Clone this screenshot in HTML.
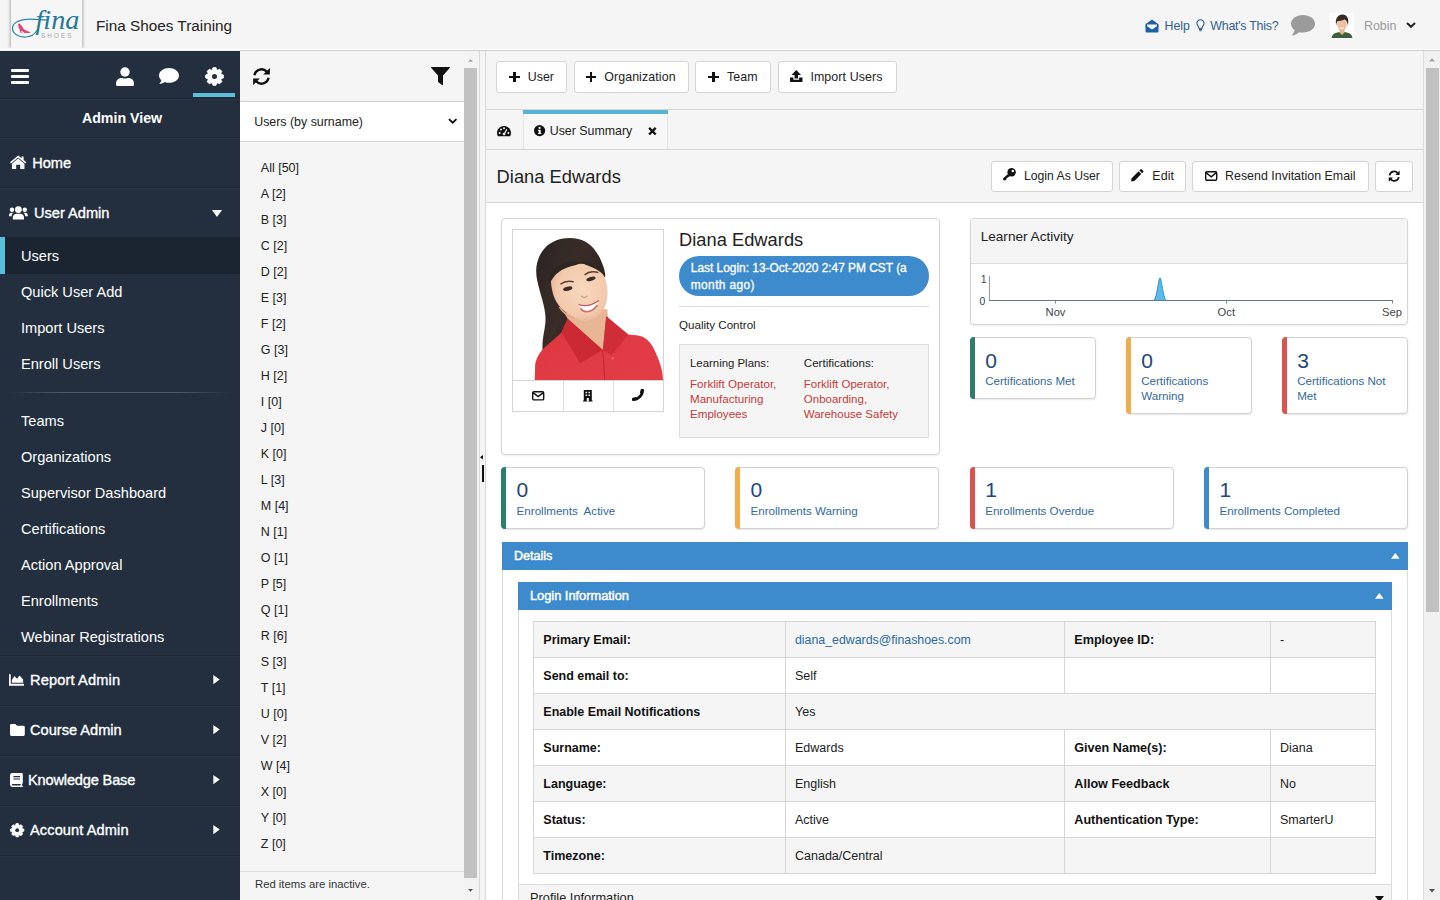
<!DOCTYPE html>
<html lang="en">
<head>
<meta charset="utf-8">
<title>Fina Shoes Training</title>
<style>
*{box-sizing:border-box;margin:0;padding:0}
html,body{width:1440px;height:900px;overflow:hidden;background:#f5f5f5;font-family:"Liberation Sans",sans-serif;color:#222;font-size:13px}
.abs{position:absolute}
.t{position:absolute;white-space:nowrap;line-height:1}
svg{position:absolute;overflow:visible}
.sb{-webkit-text-stroke:.35px #fff}
.btn{position:absolute;background:#fff;border:1px solid #d4d4d4;border-radius:3px}
.card{position:absolute;background:#fff;border:1px solid #d5d5d5;border-radius:4px;box-shadow:0 1px 2px rgba(0,0,0,.08)}
.stat{position:absolute;background:#fff;border:1px solid #d2d2d2;border-radius:4px;box-shadow:0 1px 2px rgba(0,0,0,.1)}
.stat i{position:absolute;left:-1px;top:-1px;bottom:-1px;width:5px;border-radius:4px 0 0 4px}
</style>
</head>
<body>
<!-- p_header -->
<div class="abs" style="left:0px;top:0px;width:1440px;height:50px;background:#f5f5f5;"></div>
<div class="abs" style="left:0px;top:48.5px;width:1440px;height:1.5px;background:#fdfdfd;"></div>
<div class="abs" style="left:0px;top:50px;width:1440px;height:1px;background:#cdcdcd;"></div>
<div class="abs" style="left:0px;top:50px;width:240px;height:1px;background:#eee;"></div>
<div class="abs" style="left:11px;top:-4px;width:70.5px;height:52px;background:#f6f6f6;box-shadow:0 0 3.5px rgba(0,0,0,.5);clip-path:inset(0 -6px 0 -6px);"></div>
<svg style="left:0px;top:0px;" width="96" height="54" viewBox="0 0 96 54">
<path d="M47 19.9 C39 19.6,32 19,27 19.3 C18 19.8,12.3 23.5,12.5 28.5 C12.8 34,19 37.6,26 37 C31 36.6,34.8 34,37 30.5" fill="none" stroke="#2f86a6" stroke-width="1.25" stroke-linecap="round"/>
<path d="M18.3 23.6 C19.6 23,21 24.5,22 26.5 C23.5 29.5,26 30.8,29.8 32 L30.3 33.1 L24.5 33.1 L22.5 31.2 L21.4 30.8 L21.7 33.3 L20.7 33.3 L19.6 29.5 C18.6 27.5,17.8 25.5,18.3 23.6Z" fill="#e2417a"/>
<text x="35.5" y="29.4" font-family="Liberation Serif,serif" font-style="italic" font-size="27" fill="#23789b" textLength="44" lengthAdjust="spacingAndGlyphs">fina</text>
<text x="41" y="38" font-family="Liberation Sans,sans-serif" font-size="6.3" fill="#a2a2a2" letter-spacing="2.1">SHOES</text>
</svg>
<div class="t" style="top:18px;font-size:15.3px;left:96px;color:#222;">Fina Shoes Training</div>
<svg style="left:1145px;top:19px;" width="14" height="14" viewBox="0 0 14 14"><path d="M0.5 5.2 L7 0.6 L13.5 5.2 L13.5 12.4 Q13.5 13.4 12.5 13.4 L1.5 13.4 Q0.5 13.4 0.5 12.4Z" fill="#1f5fa6"/><path d="M2.2 5.6 L11.8 5.6 L11.8 7.4 L7 10.6 L2.2 7.4Z" fill="#f5f5f5"/><path d="M0.5 6.4 L7 10.9 L13.5 6.4 L13.5 8 L7 12.4 L0.5 8Z" fill="#1f5fa6"/></svg>
<div class="t" style="top:20px;font-size:12.4px;left:1164.5px;color:#33608f;">Help</div>
<svg style="left:1195.5px;top:19px;" width="9" height="13" viewBox="0 0 9 13"><path d="M4.5 0.8 C2.3 0.8 0.9 2.4 0.9 4.3 C0.9 5.6 1.6 6.5 2.3 7.4 C2.8 8 2.9 8.6 2.9 9.2 L6.1 9.2 C6.1 8.6 6.2 8 6.7 7.4 C7.4 6.5 8.1 5.6 8.1 4.3 C8.1 2.4 6.7 0.8 4.5 0.8Z" fill="none" stroke="#2a5d94" stroke-width="1.1"/><path d="M3 10.4 L6 10.4 M3.3 11.8 L5.7 11.8" stroke="#2a5d94" stroke-width="1.1"/></svg>
<div class="t" style="top:20px;font-size:12.4px;left:1210.3px;color:#33608f;letter-spacing:-0.25px;">What's This?</div>
<svg style="left:1291px;top:14.6px;" width="24" height="21" viewBox="0 0 24 21"><path d="M12 0 C5.4 0 0 3.9 0 8.8 C0 11.3 1.4 13.5 3.6 15.1 C3.3 17 2.2 19 0.6 20.6 C3.6 20.4 6.2 19.2 7.9 17.2 C9.2 17.5 10.6 17.6 12 17.6 C18.6 17.6 24 13.7 24 8.8 C24 3.9 18.6 0 12 0Z" fill="#9b9b9b"/></svg>
<svg style="left:1330px;top:12.5px;" width="24" height="25" viewBox="0 0 24 25"><rect x="0" y="0" width="24" height="25" fill="#fdfdfd"/>
<path d="M1.5 25 C2 20.5,6.5 19,12 19 C17.5 19,22 20.5,22.5 25Z" fill="#3f5f3c"/>
<path d="M9.3 16 L14.7 16 L14.4 19.6 L12 22 L9.6 19.6Z" fill="#e6b393"/>
<ellipse cx="12" cy="11.8" rx="4.7" ry="5.7" fill="#edc0a2"/>
<path d="M6.3 12.5 C4.6 6,8 1.6,12.4 1.6 C17 1.6,19.6 6,17.7 12.5 C17.6 9.5,16.4 7.6,14.6 6.6 C12.2 7.8,8.6 8,7.2 8.6 C6.6 9.8,6.4 11,6.3 12.5Z" fill="#3b2a22"/>
<path d="M10 14.6 C11.2 15.6,12.8 15.6,14 14.6" fill="none" stroke="#fff" stroke-width="0.9"/></svg>
<div class="t" style="top:20px;font-size:12.4px;left:1364px;color:#9a9a9a;">Robin</div>
<svg style="left:1405.5px;top:22.4px;" width="10" height="6" viewBox="0 0 10 6"><path d="M1 1 L5 4.8 L9 1" fill="none" stroke="#222" stroke-width="2"/></svg>
<!-- p_side -->
<div class="abs" style="left:0px;top:51px;width:240px;height:849px;background:#232f3e;"></div>
<div class="abs" style="left:11.3px;top:69px;width:17.4px;height:3px;background:#fff;border-radius:1px;"></div>
<div class="abs" style="left:11.3px;top:74.8px;width:17.4px;height:3px;background:#fff;border-radius:1px;"></div>
<div class="abs" style="left:11.3px;top:80.6px;width:17.4px;height:3px;background:#fff;border-radius:1px;"></div>
<svg style="left:116px;top:66.7px;" width="18" height="19" viewBox="0 0 18 19"><circle cx="9" cy="5" r="4.7" fill="#fff"/><path d="M0 17.5 L0 16.5 C0 13.2 2.5 11 5.6 11 L6.4 11 C8 11.8 10 11.8 11.6 11 L12.4 11 C15.5 11 18 13.2 18 16.5 L18 17.5 Q18 19 16.5 19 L1.5 19 Q0 19 0 17.5Z" fill="#fff"/></svg>
<svg style="left:159px;top:68.3px;" width="20" height="16" viewBox="0 0 20 16"><path d="M10 0 C4.5 0 0 3.3 0 7.4 C0 9.2 0.9 10.9 2.4 12.2 C2 13.6 1.2 14.8 0.2 15.8 C2.4 15.8 4.4 15 5.8 13.9 C7.1 14.5 8.5 14.8 10 14.8 C15.5 14.8 20 11.5 20 7.4 C20 3.3 15.5 0 10 0Z" fill="#fff"/></svg>
<svg style="left:204.5px;top:66.5px;" width="19" height="19" viewBox="-3 -3 106 106"><path d="M41.5 0.7 L58.5 0.7 L61.8 11.8 L68.7 14.6 L78.9 9.2 L90.8 21.1 L85.4 31.3 L88.2 38.2 L99.3 41.5 L99.3 58.5 L88.2 61.8 L85.4 68.7 L90.8 78.9 L78.9 90.8 L68.7 85.4 L61.8 88.2 L58.5 99.3 L41.5 99.3 L38.2 88.2 L31.3 85.4 L21.1 90.8 L9.2 78.9 L14.6 68.7 L11.8 61.8 L0.7 58.5 L0.7 41.5 L11.8 38.2 L14.6 31.3 L9.2 21.1 L21.1 9.2 L31.3 14.6 L38.2 11.8Z" fill="#fff" stroke="#fff" stroke-width="5" stroke-linejoin="round"/><circle cx="50" cy="50" r="14" fill="#232f3e"/></svg>
<div class="abs" style="left:192.5px;top:93px;width:42.5px;height:4px;background:#5cbfdb;"></div>
<div class="abs" style="left:0px;top:98px;width:240px;height:1px;background:#1e2835;box-shadow:0 1px 0 #293647;"></div>
<div class="t" style="top:111px;font-size:14.2px;left:122px;transform:translateX(-50%);color:#fff;font-weight:700;">Admin View</div>
<div class="abs" style="left:0px;top:137px;width:240px;height:1px;background:#1e2835;box-shadow:0 1px 0 #293647;"></div>
<svg style="left:9.5px;top:155.3px;" width="16.4" height="14" viewBox="0 0 16.4 14"><path d="M8.2 3.6 L1.9 8.8 L1.9 13.6 Q1.9 14 2.3 14 L6.2 14 L6.2 9.8 L10.2 9.8 L10.2 14 L14.1 14 Q14.5 14 14.5 13.6 L14.5 8.8Z" fill="#fff"/><path d="M8.2 0.5 L0 7.3 L1 8.5 L8.2 2.6 L15.4 8.5 L16.4 7.3 L13.6 5 L13.6 1.4 L11.6 1.4 L11.6 3.3Z" fill="#fff"/></svg>
<div class="t sb" style="top:156px;font-size:14.6px;left:32.2px;color:#fff;">Home</div>
<div class="abs" style="left:0px;top:187px;width:240px;height:1px;background:#1e2835;box-shadow:0 1px 0 #293647;"></div>
<svg style="left:9.3px;top:206px;" width="18.8" height="13.4" viewBox="0 0 18.8 13.4"><circle cx="9.4" cy="3.6" r="3.4" fill="#fff"/><circle cx="3" cy="3.8" r="2.2" fill="#fff"/><circle cx="15.8" cy="3.8" r="2.2" fill="#fff"/><path d="M3.8 13.4 L3.8 11.6 C3.8 9.3 5.6 7.8 7.6 7.8 L11.2 7.8 C13.2 7.8 15 9.3 15 11.6 L15 13.4Z" fill="#fff"/><path d="M0 9.4 C0 7.8 1 6.8 2.4 6.8 L4.2 6.8 C3.2 7.8 2.7 8.6 2.6 10.2 L0 10.2Z" fill="#fff"/><path d="M18.8 9.4 C18.8 7.8 17.8 6.8 16.4 6.8 L14.6 6.8 C15.6 7.8 16.1 8.6 16.2 10.2 L18.8 10.2Z" fill="#fff"/></svg>
<div class="t sb" style="top:206px;font-size:14.6px;left:34px;color:#fff;">User Admin</div>
<svg style="left:212px;top:209.5px;" width="10" height="7" viewBox="0 0 10 7"><path d="M0 0 L10 0 L5 7Z" fill="#fff"/></svg>
<div class="abs" style="left:0px;top:237px;width:240px;height:37px;background:#1b2531;"></div>
<div class="abs" style="left:0px;top:237px;width:5px;height:37px;background:#58bedb;"></div>
<div class="t" style="top:249px;font-size:14.6px;left:21px;color:#fff;">Users</div>
<div class="t" style="top:285px;font-size:14.6px;left:21px;color:#fff;">Quick User Add</div>
<div class="t" style="top:321px;font-size:14.6px;left:21px;color:#fff;">Import Users</div>
<div class="t" style="top:357px;font-size:14.6px;left:21px;color:#fff;">Enroll Users</div>
<div class="t" style="top:414px;font-size:14.6px;left:21px;color:#fff;">Teams</div>
<div class="t" style="top:450px;font-size:14.6px;left:21px;color:#fff;">Organizations</div>
<div class="t" style="top:486px;font-size:14.6px;left:21px;color:#fff;">Supervisor Dashboard</div>
<div class="t" style="top:522px;font-size:14.6px;left:21px;color:#fff;">Certifications</div>
<div class="t" style="top:558px;font-size:14.6px;left:21px;color:#fff;">Action Approval</div>
<div class="t" style="top:594px;font-size:14.6px;left:21px;color:#fff;">Enrollments</div>
<div class="t" style="top:630px;font-size:14.6px;left:21px;color:#fff;">Webinar Registrations</div>
<div class="abs" style="left:8px;top:392px;width:224px;height:1px;background:transparent;background:linear-gradient(to right,rgba(80,98,118,0),rgba(80,98,118,.9) 25%,rgba(80,98,118,.9) 75%,rgba(80,98,118,0));"></div>
<div class="abs" style="left:0px;top:655px;width:240px;height:1px;background:#1e2835;box-shadow:0 1px 0 #293647;"></div>
<svg style="left:9.2px;top:674px;" width="15" height="11.8" viewBox="0 0 17 13"><path d="M0 0 L2 0 L2 11 L17 11 L17 13 L0 13Z" fill="#fff"/><path d="M3.2 9.8 L3.2 6.5 L6.2 2.2 L9 5.2 L12 1.6 L16 6 L16 9.8Z" fill="#fff"/></svg>
<div class="t sb" style="top:673px;font-size:14.6px;left:30px;color:#fff;letter-spacing:0.15px;">Report Admin</div>
<svg style="left:213.4px;top:675.4px;" width="7" height="9.2" viewBox="0 0 7 10"><path d="M0 0 L7 5 L0 10Z" fill="#fff"/></svg>
<div class="abs" style="left:0px;top:705px;width:240px;height:1px;background:#1e2835;box-shadow:0 1px 0 #293647;"></div>
<svg style="left:9.5px;top:724px;" width="14.8" height="12" viewBox="0 0 14.8 12"><path d="M1.4 0 L5.4 0 L7 1.8 L13.4 1.8 Q14.8 1.8 14.8 3.2 L14.8 10.6 Q14.8 12 13.4 12 L1.4 12 Q0 12 0 10.6 L0 1.4 Q0 0 1.4 0Z" fill="#fff"/></svg>
<div class="t sb" style="top:723px;font-size:14.6px;left:30px;color:#fff;">Course Admin</div>
<svg style="left:213.4px;top:725.4px;" width="7" height="9.2" viewBox="0 0 7 10"><path d="M0 0 L7 5 L0 10Z" fill="#fff"/></svg>
<div class="abs" style="left:0px;top:755px;width:240px;height:1px;background:#1e2835;box-shadow:0 1px 0 #293647;"></div>
<svg style="left:9.7px;top:773px;" width="12.8" height="14" viewBox="0 0 12.8 14"><path d="M2.4 0 L12 0 Q12.8 0 12.8 .8 L12.8 10.2 L12 11 L12 12.6 L12.8 13 L12.8 14 L2.4 14 Q0 14 0 11.6 L0 2.4 Q0 0 2.4 0Z" fill="#fff"/><path d="M2.6 10.9 L10.6 10.9 L10.6 12.5 L2.6 12.5 Q1.7 12.5 1.7 11.7 Q1.7 10.9 2.6 10.9Z" fill="#232f3e"/><path d="M3.4 3 L10 3 L10 4.2 L3.4 4.2Z M3.4 5.4 L10 5.4 L10 6.6 L3.4 6.6Z" fill="#232f3e"/></svg>
<div class="t sb" style="top:773px;font-size:14.6px;left:28px;color:#fff;letter-spacing:-0.17px;">Knowledge Base</div>
<svg style="left:213.4px;top:775.4px;" width="7" height="9.2" viewBox="0 0 7 10"><path d="M0 0 L7 5 L0 10Z" fill="#fff"/></svg>
<div class="abs" style="left:0px;top:805px;width:240px;height:1px;background:#1e2835;box-shadow:0 1px 0 #293647;"></div>
<svg style="left:9.7px;top:822.8px;" width="14.4" height="14.4" viewBox="-3 -3 106 106"><path d="M41.5 0.7 L58.5 0.7 L61.8 11.8 L68.7 14.6 L78.9 9.2 L90.8 21.1 L85.4 31.3 L88.2 38.2 L99.3 41.5 L99.3 58.5 L88.2 61.8 L85.4 68.7 L90.8 78.9 L78.9 90.8 L68.7 85.4 L61.8 88.2 L58.5 99.3 L41.5 99.3 L38.2 88.2 L31.3 85.4 L21.1 90.8 L9.2 78.9 L14.6 68.7 L11.8 61.8 L0.7 58.5 L0.7 41.5 L11.8 38.2 L14.6 31.3 L9.2 21.1 L21.1 9.2 L31.3 14.6 L38.2 11.8Z" fill="#fff" stroke="#fff" stroke-width="5" stroke-linejoin="round"/><circle cx="50" cy="50" r="14" fill="#232f3e"/></svg>
<div class="t sb" style="top:823px;font-size:14.6px;left:30px;color:#fff;letter-spacing:0.1px;">Account Admin</div>
<svg style="left:213.4px;top:825.4px;" width="7" height="9.2" viewBox="0 0 7 10"><path d="M0 0 L7 5 L0 10Z" fill="#fff"/></svg>
<div class="abs" style="left:0px;top:855px;width:240px;height:1px;background:#1e2835;box-shadow:0 1px 0 #293647;"></div>
<!-- p_list -->
<div class="abs" style="left:240px;top:51px;width:224px;height:849px;background:#f5f5f5;"></div>
<svg style="left:251.5px;top:66.5px;" width="19" height="19" viewBox="0 0 20 20"><path d="M2.6 8.6 A7.5 7.5 0 0 1 15.6 5" fill="none" stroke="#111" stroke-width="2.6"/>
<path d="M17.4 11.4 A7.5 7.5 0 0 1 4.4 15" fill="none" stroke="#111" stroke-width="2.6"/>
<path d="M18.8 1 L18.8 8 L11.8 8Z" fill="#111"/>
<path d="M1.2 19 L1.2 12 L8.2 12Z" fill="#111"/></svg>
<svg style="left:431px;top:67px;" width="19" height="18.5" viewBox="0 0 19 18.5"><path d="M0.6 0 L18.4 0 Q19.4 0 18.7 0.9 L12 8.4 L12 17.6 Q12 18.6 11.2 18 L7.4 15.2 Q7 14.9 7 14.4 L7 8.4 L0.3 0.9 Q-0.4 0 0.6 0Z" fill="#111"/></svg>
<div class="abs" style="left:240px;top:101px;width:224px;height:1px;background:#d0d0d0;"></div>
<div class="abs" style="left:240px;top:102px;width:224px;height:39px;background:#fff;"></div>
<div class="abs" style="left:240px;top:141px;width:224px;height:1px;background:#d8d8d8;"></div>
<div class="t" style="top:116px;font-size:12.4px;left:254.2px;color:#222;">Users (by surname)</div>
<svg style="left:448.3px;top:118.2px;" width="9.4" height="6" viewBox="0 0 10 6"><path d="M1 1 L5 4.8 L9 1" fill="none" stroke="#111" stroke-width="2"/></svg>
<div class="t" style="top:162px;font-size:12.5px;left:260.8px;color:#222;">All [50]</div>
<div class="t" style="top:188px;font-size:12.5px;left:260.8px;color:#222;">A [2]</div>
<div class="t" style="top:214px;font-size:12.5px;left:260.8px;color:#222;">B [3]</div>
<div class="t" style="top:240px;font-size:12.5px;left:260.8px;color:#222;">C [2]</div>
<div class="t" style="top:266px;font-size:12.5px;left:260.8px;color:#222;">D [2]</div>
<div class="t" style="top:292px;font-size:12.5px;left:260.8px;color:#222;">E [3]</div>
<div class="t" style="top:318px;font-size:12.5px;left:260.8px;color:#222;">F [2]</div>
<div class="t" style="top:344px;font-size:12.5px;left:260.8px;color:#222;">G [3]</div>
<div class="t" style="top:370px;font-size:12.5px;left:260.8px;color:#222;">H [2]</div>
<div class="t" style="top:396px;font-size:12.5px;left:260.8px;color:#222;">I [0]</div>
<div class="t" style="top:422px;font-size:12.5px;left:260.8px;color:#222;">J [0]</div>
<div class="t" style="top:448px;font-size:12.5px;left:260.8px;color:#222;">K [0]</div>
<div class="t" style="top:474px;font-size:12.5px;left:260.8px;color:#222;">L [3]</div>
<div class="t" style="top:500px;font-size:12.5px;left:260.8px;color:#222;">M [4]</div>
<div class="t" style="top:526px;font-size:12.5px;left:260.8px;color:#222;">N [1]</div>
<div class="t" style="top:552px;font-size:12.5px;left:260.8px;color:#222;">O [1]</div>
<div class="t" style="top:578px;font-size:12.5px;left:260.8px;color:#222;">P [5]</div>
<div class="t" style="top:604px;font-size:12.5px;left:260.8px;color:#222;">Q [1]</div>
<div class="t" style="top:630px;font-size:12.5px;left:260.8px;color:#222;">R [6]</div>
<div class="t" style="top:656px;font-size:12.5px;left:260.8px;color:#222;">S [3]</div>
<div class="t" style="top:682px;font-size:12.5px;left:260.8px;color:#222;">T [1]</div>
<div class="t" style="top:708px;font-size:12.5px;left:260.8px;color:#222;">U [0]</div>
<div class="t" style="top:734px;font-size:12.5px;left:260.8px;color:#222;">V [2]</div>
<div class="t" style="top:760px;font-size:12.5px;left:260.8px;color:#222;">W [4]</div>
<div class="t" style="top:786px;font-size:12.5px;left:260.8px;color:#222;">X [0]</div>
<div class="t" style="top:812px;font-size:12.5px;left:260.8px;color:#222;">Y [0]</div>
<div class="t" style="top:838px;font-size:12.5px;left:260.8px;color:#222;">Z [0]</div>
<div class="abs" style="left:240px;top:871px;width:224px;height:1px;background:#dcdcdc;"></div>
<div class="t" style="top:879px;font-size:11.3px;left:255px;color:#333;">Red items are inactive.</div>
<div class="abs" style="left:464px;top:51px;width:15px;height:849px;background:#f3f3f3;"></div>
<div class="abs" style="left:464px;top:68px;width:12.7px;height:810px;background:#c1c1c1;"></div>
<svg style="left:468px;top:58.6px;" width="5" height="2.8" viewBox="0 0 6 3.5"><path d="M0 3.5 L3 0 L6 3.5Z" fill="#a3a3a3"/></svg>
<svg style="left:468px;top:889px;" width="5" height="2.8" viewBox="0 0 6 3.5"><path d="M0 0 L3 3.5 L6 0Z" fill="#505050"/></svg>
<div class="abs" style="left:479px;top:51px;width:1px;height:849px;background:#d8d8d8;"></div>
<div class="abs" style="left:480px;top:51px;width:5px;height:849px;background:#f5f5f5;"></div>
<div class="abs" style="left:485px;top:51px;width:1px;height:849px;background:#d8d8d8;"></div>
<svg style="left:480.3px;top:454.6px;" width="3" height="4.5" viewBox="0 0 3 4.5"><path d="M3 0 L0 2.25 L3 4.5Z" fill="#111"/></svg>
<div class="abs" style="left:481.6px;top:465px;width:2.2px;height:17px;background:#111;"></div>
<!-- p_main1 -->
<div class="abs" style="left:486px;top:51px;width:938px;height:152px;background:#f5f5f5;"></div>
<div class="btn" style="left:496.3px;top:61px;width:70.7px;height:32px"></div>
<div class="abs" style="left:509.2px;top:75.6px;width:10.4px;height:2.4px;background:#111;"></div>
<div class="abs" style="left:513.2px;top:71.6px;width:2.4px;height:10.4px;background:#111;"></div>
<div class="t" style="top:71px;font-size:12.4px;left:527.8px;">User</div>
<div class="btn" style="left:573.5px;top:61px;width:115.5px;height:32px"></div>
<div class="abs" style="left:585.9px;top:75.6px;width:10.4px;height:2.4px;background:#111;"></div>
<div class="abs" style="left:589.9px;top:71.6px;width:2.4px;height:10.4px;background:#111;"></div>
<div class="t" style="top:71px;font-size:12.4px;left:604.2px;letter-spacing:0.1px;">Organization</div>
<div class="btn" style="left:695px;top:61px;width:75.5px;height:32px"></div>
<div class="abs" style="left:708.3px;top:75.6px;width:10.4px;height:2.4px;background:#111;"></div>
<div class="abs" style="left:712.3px;top:71.6px;width:2.4px;height:10.4px;background:#111;"></div>
<div class="t" style="top:71px;font-size:12.4px;left:727px;letter-spacing:0.1px;">Team</div>
<div class="btn" style="left:777.5px;top:61px;width:119.5px;height:32px"></div>
<svg style="left:790px;top:70.4px;" width="12.5" height="12" viewBox="0 0 12.5 12"><path d="M6.25 0 L11 4.9 L8 4.9 L8 8.6 L4.5 8.6 L4.5 4.9 L1.5 4.9Z" fill="#111"/><path d="M0 7.6 L3.4 7.6 L3.4 9.8 L9.1 9.8 L9.1 7.6 L12.5 7.6 L12.5 11.2 Q12.5 12 11.7 12 L0.8 12 Q0 12 0 11.2Z" fill="#111"/></svg>
<div class="t" style="top:71px;font-size:12.4px;left:810.4px;letter-spacing:0.1px;">Import Users</div>
<div class="abs" style="left:486px;top:109px;width:938px;height:1px;background:#d4d4d4;"></div>
<div class="abs" style="left:523px;top:110px;width:144.5px;height:39px;background:#f7f7f7;"></div>
<div class="abs" style="left:522.5px;top:110px;width:1px;height:39px;background:#e4e4e4;"></div>
<div class="abs" style="left:667px;top:110px;width:1px;height:39px;background:#e4e4e4;"></div>
<div class="abs" style="left:523px;top:110px;width:144.5px;height:4px;background:#55b4cf;"></div>
<svg style="left:497px;top:125.8px;" width="14" height="10.3" viewBox="0 0 14 10.3"><path d="M7 0 C3.1 0 0 3.1 0 7 C0 8.2 0.3 9.3 0.85 10.3 L13.15 10.3 C13.7 9.3 14 8.2 14 7 C14 3.1 10.9 0 7 0Z" fill="#111"/><circle cx="2.6" cy="6.9" r="1" fill="#f5f5f5"/><circle cx="4" cy="3.6" r="1" fill="#f5f5f5"/><circle cx="7" cy="2.3" r="1" fill="#f5f5f5"/><circle cx="11.4" cy="6.9" r="1" fill="#f5f5f5"/><path d="M9.3 3 L10.4 3.5 L8.2 7.4 C8.7 8.4 8 9.3 7 9.3 C5.9 9.3 5.3 8.2 5.9 7.3 C6.2 6.9 6.7 6.7 7.2 6.8Z" fill="#f5f5f5"/></svg>
<svg style="left:534px;top:125.4px;" width="11.2" height="11.2" viewBox="0 0 12 12"><circle cx="6" cy="6" r="6" fill="#111"/><rect x="5" y="5.2" width="2.2" height="4" fill="#f7f7f7"/><rect x="4.3" y="8.6" width="3.6" height="1.1" fill="#f7f7f7"/><rect x="4.3" y="5.2" width="1.6" height="1.1" fill="#f7f7f7"/><circle cx="6" cy="3.2" r="1.2" fill="#f7f7f7"/></svg>
<div class="t" style="top:125px;font-size:12.4px;left:549.7px;letter-spacing:0.0px;">User Summary</div>
<svg style="left:647.6px;top:126.6px;" width="8.8" height="8.4" viewBox="0 0 8 7.6"><path d="M1 0.8 L7 6.8 M7 0.8 L1 6.8" stroke="#111" stroke-width="2.1"/></svg>
<div class="abs" style="left:486px;top:149px;width:938px;height:1px;background:#d4d4d4;"></div>
<div class="t" style="top:168px;font-size:18.3px;left:496.6px;color:#222;letter-spacing:0.02px;">Diana Edwards</div>
<div class="btn" style="left:991px;top:160.7px;width:121.7px;height:31px"></div>
<svg style="left:1003.3px;top:168.4px;" width="12.8" height="12.4" viewBox="0 0 12.8 12.4"><circle cx="8.6" cy="4.2" r="4.2" fill="#111"/><circle cx="9.8" cy="3" r="1.2" fill="#fff"/><path d="M5.6 5.6 L7.4 7.4 L5.9 8.9 L4.7 8.9 L4.7 10.1 L3.5 10.1 L3.5 11.3 L2.6 12.2 L0.2 12.2 L0.2 10.3Z" fill="#111"/></svg>
<div class="t" style="top:170px;font-size:12.2px;left:1024px;letter-spacing:0.0px;">Login As User</div>
<div class="btn" style="left:1119.3px;top:160.7px;width:66.4px;height:31px"></div>
<svg style="left:1131px;top:168.6px;" width="12.6" height="12.6" viewBox="0 0 12.6 12.6"><path d="M0 12.6 L0.7 9.2 L7.6 2.3 L10.3 5 L3.4 11.9Z" fill="#111"/><path d="M8.4 1.5 L9.6 0.3 Q10 -0.1 10.5 0.3 L12.3 2.1 Q12.7 2.6 12.3 3 L11.1 4.2Z" fill="#111"/></svg>
<div class="t" style="top:170px;font-size:12.4px;left:1152.3px;letter-spacing:0.1px;">Edit</div>
<div class="btn" style="left:1192.3px;top:160.7px;width:176.4px;height:31px"></div>
<svg style="left:1205px;top:170.6px;" width="12.4" height="10" viewBox="0 0 12.4 10"><rect x="0.7" y="0.7" width="11" height="8.6" rx="1.2" fill="none" stroke="#111" stroke-width="1.4"/><path d="M1 1.6 L6.2 5.8 L11.4 1.6" fill="none" stroke="#111" stroke-width="1.4"/></svg>
<div class="t" style="top:170px;font-size:12.4px;left:1225px;letter-spacing:0.02px;">Resend Invitation Email</div>
<div class="btn" style="left:1375px;top:160.7px;width:37.7px;height:31px"></div>
<svg style="left:1387.6px;top:169.8px;" width="12.4" height="12.4" viewBox="0 0 20 20"><path d="M2.6 8.6 A7.5 7.5 0 0 1 15.6 5" fill="none" stroke="#111" stroke-width="2.8"/>
<path d="M17.4 11.4 A7.5 7.5 0 0 1 4.4 15" fill="none" stroke="#111" stroke-width="2.8"/>
<path d="M18.8 1 L18.8 8 L11.8 8Z" fill="#111"/>
<path d="M1.2 19 L1.2 12 L8.2 12Z" fill="#111"/></svg>
<div class="abs" style="left:486px;top:202px;width:938px;height:1px;background:#d4d4d4;"></div>
<div class="abs" style="left:486px;top:203px;width:938px;height:697px;background:#fff;"></div>
<div class="abs" style="left:1423px;top:51px;width:1px;height:849px;background:#dcdcdc;"></div>
<div class="abs" style="left:1424px;top:51px;width:16px;height:849px;background:#f1f1f1;"></div>
<div class="abs" style="left:1426px;top:68px;width:13px;height:544px;background:#c1c1c1;"></div>
<svg style="left:1429.3px;top:58px;" width="6" height="3.5" viewBox="0 0 6 3.5"><path d="M0 3.5 L3 0 L6 3.5Z" fill="#a3a3a3"/></svg>
<svg style="left:1429.3px;top:889px;" width="6" height="3.5" viewBox="0 0 6 3.5"><path d="M0 0 L3 3.5 L6 0Z" fill="#505050"/></svg>
<!-- p_main2 -->
<div class="card" style="left:501.4px;top:218px;width:438.6px;height:237px"></div>
<div class="abs" style="left:512px;top:229px;width:152px;height:182.5px;background:#fff;border:1px solid #d4d4d4;"></div>
<svg style="left:513px;top:230px;overflow:hidden;" width="150" height="150" viewBox="0 0 152 152"><rect width="152" height="152" fill="#fff"/>
<defs><filter id="bl" x="-10%" y="-10%" width="120%" height="120%"><feGaussianBlur stdDeviation="0.7"/></filter>
<radialGradient id="sk" cx="0.55" cy="0.45" r="0.65"><stop offset="0" stop-color="#f8d8c0"/><stop offset="0.7" stop-color="#f2c9ab"/><stop offset="1" stop-color="#e2ab8b"/></radialGradient>
<linearGradient id="sh" x1="0" y1="0" x2="1" y2="1"><stop offset="0" stop-color="#df3842"/><stop offset="1" stop-color="#e23c46"/></linearGradient>
<linearGradient id="hr" x1="0" y1="0" x2="1" y2="0.6"><stop offset="0" stop-color="#2a2422"/><stop offset="0.55" stop-color="#3a2d28"/><stop offset="1" stop-color="#2a2220"/></linearGradient></defs>
<g filter="url(#bl)">
<path d="M30 122 C29 110,33 100,33 90 C33 78,27 64,24.5 51 C22 40,24 27,33 17.5 C41 9.5,54 6.5,66 9 C77 11.5,85 20,90 33 C92 38,93.5 42,93.5 47 L62 60 L56 92 C54 104,50 112,44 118 C40 121,34 122,30 122Z" fill="url(#hr)"/>
<path d="M52 84 L95.5 80 C96.5 90,97 96,96.5 101 L92 123 L66 108Z" fill="#e8b595"/>
<path d="M22 152 L22.5 136 C24 128,29 121,35 116.5 L49 104 L55.5 90 L91 121.5 L94.5 87.5 L117 106 C123 106.5,128 107,132 108.5 C138 112,142 118,144 123 C148 131,150.5 139,151.5 146 L152 152Z" fill="url(#sh)"/>
<path d="M55.5 90 L49 103.5 L68 135 L91 121.5Z" fill="#cb2b35"/>
<path d="M94.5 87.5 L91 121.5 L100 127 L116.5 106.5Z" fill="#cf2e38"/>
<path d="M91 121.5 L93 152" fill="none" stroke="#bf2932" stroke-width="1"/>
<circle cx="101" cy="130" r="1.4" fill="#e8606a"/>
<path d="M38.5 46 C42 40,49 36,57 35 C66 33.5,78 34,86 39 C90 42,93 47,94.5 53 C96 59,96.2 66,95 71 C94 77,92 81,89 84 C86 88,82 91,77 92 C72 93,67 91.5,63 89.5 C56 86,50 81,46.5 76.5 C43 72,40.5 66,39.5 60 C38.5 55,38 50,38.5 46Z" fill="url(#sk)"/>
<path d="M37.5 54 C36.5 46,39 40,45 36.5 C53 32,62 31.5,70 33 C66 35,60 36.5,55 38 C47 41,41 46,37.5 54Z" fill="#2e2623"/>
<path d="M70 33 C78 31,87 35,93.5 47 C89 42,83 38.5,78 37 C75 36,72 34.5,70 33Z" fill="#2e2623"/>
<path d="M67.5 76 C73 78.5,80 77,86.5 72 C85.5 78,80.5 83,75 83 C71 83,68.5 80,67.5 76Z" fill="#fff"/>
<path d="M66.5 75.5 C73 78,80 76.5,87 71.5" fill="none" stroke="#c25a64" stroke-width="1.3"/>
<path d="M68.5 79.5 C72 84.5,80 84,85.5 76" fill="none" stroke="#cf6a72" stroke-width="1.6"/>
<ellipse cx="55.5" cy="59.5" rx="4.8" ry="2" fill="#3b2a25" transform="rotate(-14 55.5 59.5)"/>
<ellipse cx="79" cy="49.5" rx="4.8" ry="2" fill="#3b2a25" transform="rotate(-16 79 49.5)"/>
<path d="M48 55 C52 52,57 51.5,61.5 52.5" fill="none" stroke="#5b4034" stroke-width="1.5"/>
<path d="M72.5 45.5 C76 42.5,81 41.5,86.5 43" fill="none" stroke="#5b4034" stroke-width="1.5"/>
<path d="M69 66.5 C70.5 69,73.5 69,75.5 66.5" fill="none" stroke="#d4977a" stroke-width="1.3"/>
<path d="M47 78 C51 84,57 88,63 90" fill="none" stroke="#e0a888" stroke-width="1.5"/>
</g></svg>
<div class="abs" style="left:512px;top:380px;width:152px;height:1px;background:#d4d4d4;"></div>
<div class="abs" style="left:563px;top:381px;width:1px;height:30px;background:#dedede;"></div>
<div class="abs" style="left:613px;top:381px;width:1px;height:30px;background:#dedede;"></div>
<svg style="left:532px;top:390.6px;" width="12.4" height="9.6" viewBox="0 0 12.4 9.6"><rect x="0.7" y="0.7" width="11" height="8.2" rx="1.2" fill="none" stroke="#111" stroke-width="1.4"/><path d="M1 1.6 L6.2 5.6 L11.4 1.6" fill="none" stroke="#111" stroke-width="1.4"/></svg>
<svg style="left:583px;top:389.6px;" width="9.6" height="11.6" viewBox="0 0 9.6 11.6"><path d="M0.8 0 L8.8 0 L8.8 10.6 L9.6 10.6 L9.6 11.6 L0 11.6 L0 10.6 L0.8 10.6Z" fill="#111"/><path d="M2.6 1.8h1.5v1.5h-1.5zM5.5 1.8h1.5v1.5h-1.5zM2.6 4.6h1.5v1.5h-1.5zM5.5 4.6h1.5v1.5h-1.5zM3.8 8h2v3.6h-2z" fill="#fff"/></svg>
<svg style="left:631.5px;top:389.2px;" width="12" height="12" viewBox="0 0 12 12"><path d="M2.4 10.4 C6.6 10,10 6.6,10.4 2.4" fill="none" stroke="#111" stroke-width="2.9"/><path d="M0.1 8.9 L3.9 7.9 L5.2 11 L1.5 12.1 Q0.2 12.3 0 11Z" fill="#111"/><path d="M8.9 0.1 L7.9 3.9 L11 5.2 L12.1 1.5 Q12.3 0.2 11 0Z" fill="#111"/></svg>
<div class="t" style="top:231px;font-size:18.3px;left:679px;color:#222;letter-spacing:0.02px;">Diana Edwards</div>
<div class="abs" style="left:679px;top:256px;width:250px;height:40px;background:#3d8bcd;border-radius:20px;"></div>
<div class="t" style="top:263px;font-size:11.9px;left:690.8px;color:#fff;-webkit-text-stroke:.3px #fff;">Last Login: 13-Oct-2020 2:47 PM CST (a</div>
<div class="t" style="top:280px;font-size:11.9px;left:690.8px;color:#fff;letter-spacing:0.4px;-webkit-text-stroke:.3px #fff;">month ago)</div>
<div class="abs" style="left:679px;top:306px;width:250px;height:1px;background:#dcdcdc;"></div>
<div class="t" style="top:319px;font-size:11.6px;left:679px;color:#222;">Quality Control</div>
<div class="abs" style="left:679px;top:344px;width:250px;height:94px;background:#f5f5f5;border:1px solid #dcdcdc;"></div>
<div class="t" style="top:358px;font-size:11.4px;left:690px;color:#222;">Learning Plans:</div>
<div class="t" style="top:357px;font-size:11.6px;left:803.8px;color:#222;">Certifications:</div>
<div class="t" style="top:378px;font-size:11.6px;left:690px;color:#c23b3b;">Forklift Operator,</div>
<div class="t" style="top:393px;font-size:11.6px;left:690px;color:#c23b3b;">Manufacturing</div>
<div class="t" style="top:408px;font-size:11.6px;left:690px;color:#c23b3b;">Employees</div>
<div class="t" style="top:379px;font-size:11.5px;left:803.8px;color:#c23b3b;">Forklift Operator,</div>
<div class="t" style="top:394px;font-size:11.5px;left:803.8px;color:#c23b3b;">Onboarding,</div>
<div class="t" style="top:409px;font-size:11.5px;left:803.8px;color:#c23b3b;">Warehouse Safety</div>
<div class="card" style="left:970px;top:218px;width:438px;height:107px;overflow:hidden"><div style="height:45px;background:#f5f5f5;border-bottom:1px solid #dcdcdc"></div></div>
<div class="t" style="top:230px;font-size:13.6px;left:980.7px;color:#222;">Learner Activity</div>
<svg style="left:0px;top:0px;pointer-events:none;" width="1440" height="900" viewBox="0 0 1440 900"><line x1="989.5" y1="276" x2="989.5" y2="300.5" stroke="#9a9a9a" stroke-width="1"/>
<line x1="1055.5" y1="300" x2="1055.5" y2="303.5" stroke="#888"/><line x1="1226.5" y1="300" x2="1226.5" y2="303.5" stroke="#888"/><line x1="1392.5" y1="300" x2="1392.5" y2="303.5" stroke="#888"/>
<path d="M1154 300.5 C1157 298,1158.5 278,1160 278 C1161.5 278,1163 298,1166 300.5Z" fill="#5bbcec" stroke="#2f8fc8" stroke-width="1"/>
<line x1="989" y1="300.5" x2="1393" y2="300.5" stroke="#5a7f8a" stroke-width="1.2"/></svg>
<div class="t" style="top:274px;font-size:10.5px;left:980.8px;color:#444;">1</div>
<div class="t" style="top:296px;font-size:10.5px;left:979.6px;color:#444;">0</div>
<div class="t" style="top:307px;font-size:11.2px;left:1055.5px;transform:translateX(-50%);color:#444;">Nov</div>
<div class="t" style="top:307px;font-size:11.2px;left:1226.3px;transform:translateX(-50%);color:#444;">Oct</div>
<div class="t" style="top:307px;font-size:11.2px;left:1392px;transform:translateX(-50%);color:#444;">Sep</div>
<div class="stat" style="left:970px;top:337px;width:126px;height:62px"><i style="background:#2e7d6b"></i></div>
<div class="t" style="top:350px;font-size:21px;left:985.2px;color:#23457c;">0</div>
<div class="t" style="top:375px;font-size:11.6px;left:985.2px;color:#336a9c;">Certifications Met</div>
<div class="stat" style="left:1126px;top:337px;width:126px;height:77px"><i style="background:#f0ad4e"></i></div>
<div class="t" style="top:350px;font-size:21px;left:1141.2px;color:#23457c;">0</div>
<div class="t" style="top:375px;font-size:11.6px;left:1141.2px;color:#336a9c;">Certifications</div>
<div class="t" style="top:390px;font-size:11.6px;left:1141.2px;color:#336a9c;">Warning</div>
<div class="stat" style="left:1282px;top:337px;width:126px;height:77px"><i style="background:#d9534f"></i></div>
<div class="t" style="top:350px;font-size:21px;left:1297.2px;color:#23457c;">3</div>
<div class="t" style="top:375px;font-size:11.6px;left:1297.2px;color:#336a9c;">Certifications Not</div>
<div class="t" style="top:390px;font-size:11.6px;left:1297.2px;color:#336a9c;">Met</div>
<div class="stat" style="left:501.4px;top:467px;width:203.3px;height:62px"><i style="background:#2e7d6b"></i></div>
<div class="t" style="top:479px;font-size:21px;left:516.6px;color:#23457c;">0</div>
<div class="t" style="top:505px;font-size:11.6px;left:516.6px;color:#336a9c;">Enrollments&nbsp; Active</div>
<div class="stat" style="left:735.3px;top:467px;width:204px;height:62px"><i style="background:#f0ad4e"></i></div>
<div class="t" style="top:479px;font-size:21px;left:750.5px;color:#23457c;">0</div>
<div class="t" style="top:505px;font-size:11.6px;left:750.5px;color:#336a9c;">Enrollments Warning</div>
<div class="stat" style="left:970px;top:467px;width:203.5px;height:62px"><i style="background:#d9534f"></i></div>
<div class="t" style="top:479px;font-size:21px;left:985.2px;color:#23457c;">1</div>
<div class="t" style="top:505px;font-size:11.6px;left:985.2px;color:#336a9c;">Enrollments Overdue</div>
<div class="stat" style="left:1204.3px;top:467px;width:203.5px;height:62px"><i style="background:#3d8bcd"></i></div>
<div class="t" style="top:479px;font-size:21px;left:1219.5px;color:#23457c;">1</div>
<div class="t" style="top:505px;font-size:11.6px;left:1219.5px;color:#336a9c;">Enrollments Completed</div>
<!-- p_main3 -->
<div class="abs" style="left:501.5px;top:541.5px;width:906.3px;height:360px;background:#fff;border:1px solid #dcdcdc;"></div>
<div class="abs" style="left:501.5px;top:541.5px;width:906.3px;height:28.5px;background:#3d8bcd;"></div>
<div class="t" style="top:550px;font-size:12.5px;left:514px;color:#fff;-webkit-text-stroke:.45px #fff;">Details</div>
<svg style="left:1390.8px;top:553.2px;" width="8.6" height="5.8" viewBox="0 0 8.6 5.8"><path d="M0 5.8 L4.3 0 L8.6 5.8Z" fill="#fff"/></svg>
<div class="abs" style="left:517.5px;top:581.5px;width:874.3px;height:310px;background:#fff;border:1px solid #dcdcdc;"></div>
<div class="abs" style="left:517.5px;top:581.5px;width:874.3px;height:28.5px;background:#3d8bcd;"></div>
<div class="t" style="top:590px;font-size:12.8px;left:530px;color:#fff;-webkit-text-stroke:.45px #fff;">Login Information</div>
<svg style="left:1375px;top:593.2px;" width="8.6" height="5.8" viewBox="0 0 8.6 5.8"><path d="M0 5.8 L4.3 0 L8.6 5.8Z" fill="#fff"/></svg>
<div class="abs" style="left:533px;top:621px;width:843px;height:253px;background:#fff;"></div>
<div class="abs" style="left:533px;top:621px;width:843px;height:36px;background:#f5f5f5;"></div>
<div class="abs" style="left:533px;top:693px;width:843px;height:36px;background:#f5f5f5;"></div>
<div class="abs" style="left:533px;top:765px;width:843px;height:36px;background:#f5f5f5;"></div>
<div class="abs" style="left:533px;top:837px;width:843px;height:36px;background:#f5f5f5;"></div>
<div class="abs" style="left:533px;top:621px;width:843px;height:1px;background:#d6d6d6;"></div>
<div class="abs" style="left:533px;top:657px;width:843px;height:1px;background:#d6d6d6;"></div>
<div class="abs" style="left:533px;top:693px;width:843px;height:1px;background:#d6d6d6;"></div>
<div class="abs" style="left:533px;top:729px;width:843px;height:1px;background:#d6d6d6;"></div>
<div class="abs" style="left:533px;top:765px;width:843px;height:1px;background:#d6d6d6;"></div>
<div class="abs" style="left:533px;top:801px;width:843px;height:1px;background:#d6d6d6;"></div>
<div class="abs" style="left:533px;top:837px;width:843px;height:1px;background:#d6d6d6;"></div>
<div class="abs" style="left:533px;top:873px;width:843px;height:1px;background:#d6d6d6;"></div>
<div class="abs" style="left:533px;top:621px;width:1px;height:253px;background:#d6d6d6;"></div>
<div class="abs" style="left:1375px;top:621px;width:1px;height:253px;background:#d6d6d6;"></div>
<div class="abs" style="left:785px;top:621px;width:1px;height:253px;background:#d6d6d6;"></div>
<div class="abs" style="left:1064px;top:621px;width:1px;height:73px;background:#d6d6d6;"></div>
<div class="abs" style="left:1270px;top:621px;width:1px;height:73px;background:#d6d6d6;"></div>
<div class="abs" style="left:1064px;top:729px;width:1px;height:145px;background:#d6d6d6;"></div>
<div class="abs" style="left:1270px;top:729px;width:1px;height:145px;background:#d6d6d6;"></div>
<div class="t" style="top:634px;font-size:12.5px;left:543.3px;color:#111;font-weight:700;">Primary Email:</div>
<div class="t" style="top:634px;font-size:12.35px;left:795px;color:#2a6aa0;">diana_edwards@finashoes.com</div>
<div class="t" style="top:634px;font-size:12.6px;left:1074.3px;color:#111;font-weight:700;">Employee ID:</div>
<div class="t" style="top:634px;font-size:12.5px;left:1280px;color:#222;">-</div>
<div class="t" style="top:670px;font-size:12.5px;left:543.3px;color:#111;font-weight:700;">Send email to:</div>
<div class="t" style="top:670px;font-size:12.5px;left:795px;color:#222;">Self</div>
<div class="t" style="top:706px;font-size:12.5px;left:543.3px;color:#111;font-weight:700;">Enable Email Notifications</div>
<div class="t" style="top:706px;font-size:12.5px;left:795px;color:#222;">Yes</div>
<div class="t" style="top:742px;font-size:12.5px;left:543.3px;color:#111;font-weight:700;">Surname:</div>
<div class="t" style="top:742px;font-size:12.5px;left:795px;color:#222;">Edwards</div>
<div class="t" style="top:742px;font-size:12.6px;left:1074.3px;color:#111;font-weight:700;">Given Name(s):</div>
<div class="t" style="top:742px;font-size:12.5px;left:1280px;color:#222;">Diana</div>
<div class="t" style="top:778px;font-size:12.5px;left:543.3px;color:#111;font-weight:700;">Language:</div>
<div class="t" style="top:778px;font-size:12.5px;left:795px;color:#222;">English</div>
<div class="t" style="top:778px;font-size:12.6px;left:1074.3px;color:#111;font-weight:700;">Allow Feedback</div>
<div class="t" style="top:778px;font-size:12.5px;left:1280px;color:#222;">No</div>
<div class="t" style="top:814px;font-size:12.5px;left:543.3px;color:#111;font-weight:700;">Status:</div>
<div class="t" style="top:814px;font-size:12.5px;left:795px;color:#222;">Active</div>
<div class="t" style="top:814px;font-size:12.6px;left:1074.3px;color:#111;font-weight:700;">Authentication Type:</div>
<div class="t" style="top:814px;font-size:12.5px;left:1280px;color:#222;">SmarterU</div>
<div class="t" style="top:850px;font-size:12.5px;left:543.3px;color:#111;font-weight:700;">Timezone:</div>
<div class="t" style="top:850px;font-size:12.5px;left:795px;color:#222;">Canada/Central</div>
<div class="abs" style="left:517.5px;top:883.5px;width:874.3px;height:30px;background:#f5f5f5;border:1px solid #dcdcdc;"></div>
<div class="t" style="top:892px;font-size:12.8px;left:530px;color:#222;">Profile Information</div>
<svg style="left:1374.8px;top:896.4px;" width="9" height="6" viewBox="0 0 9 6"><path d="M0 0 L9 0 L4.5 6Z" fill="#111"/></svg>
</body>
</html>
